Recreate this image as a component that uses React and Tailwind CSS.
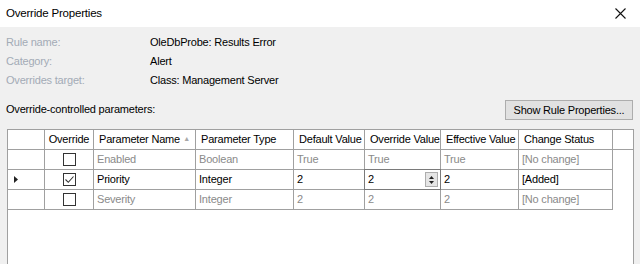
import React from 'react';

const cols = [37, 49, 102, 98, 71, 76, 78, 94];

const headers = ['', 'Override', 'Parameter Name', 'Parameter Type', 'Default Value', 'Override Value', 'Effective Value', 'Change Status'];

const rows = [
  { on: false, name: 'Enabled', type: 'Boolean', def: 'True', ov: 'True', eff: 'True', status: '[No change]', dim: true },
  { on: true, name: 'Priority', type: 'Integer', def: '2', ov: '2', eff: '2', status: '[Added]', dim: false, current: true },
  { on: false, name: 'Severity', type: 'Integer', def: '2', ov: '2', eff: '2', status: '[No change]', dim: true },
];

const CheckBox = ({ checked }) => (
  <div className="w-[13px] h-[13px] border border-[#333333] bg-white flex items-center justify-center">
    {checked && (
      <svg width="11" height="11" viewBox="0 0 11 11">
        <path d="M1.5 5.5 L4.3 8.3 L9.5 2.5" fill="none" stroke="#333" strokeWidth="1.1" />
      </svg>
    )}
  </div>
);

const App = () => {
  return (
    <div className="w-[640px] h-[264px] overflow-hidden bg-[#f0f0f0] text-[11px] tracking-[-0.2px] text-black whitespace-nowrap" style={{ fontFamily: '"Liberation Sans", Arial, sans-serif' }}>
      {/* title bar */}
      <div className="h-[27px] bg-white flex items-center justify-between pl-[6px] pr-[14px]">
        <span className="text-[11.5px]">Override Properties</span>
        <svg width="11" height="11" viewBox="0 0 11 11">
          <path d="M0.5 0.5 L10.5 10.5 M10.5 0.5 L0.5 10.5" stroke="#111" strokeWidth="1.1" />
        </svg>
      </div>

      {/* info */}
      <div className="pt-[6px] pl-[6px] flex flex-col">
        {[
          ['Rule name:', 'OleDbProbe: Results Error'],
          ['Category:', 'Alert'],
          ['Overrides target:', 'Class: Management Server'],
        ].map(([k, v]) => (
          <div key={k} className="flex h-[19px] items-center">
            <span className="w-[144px] text-[#a3abb6]">{k}</span>
            <span>{v}</span>
          </div>
        ))}
      </div>

      {/* params label + button */}
      <div className="flex items-end justify-between pl-[6px] pr-[7px] mt-[5px] h-[25px]">
        <span className="mb-[3px]">Override-controlled parameters:</span>
        <button className="w-[128px] h-[20px] bg-[#e1e1e1] border border-[#adadad] leading-none whitespace-nowrap">
          Show Rule Properties...
        </button>
      </div>

      {/* grid */}
      <div className="ml-[7px] mt-[9px] w-[627px] h-[140px] border border-[#a0a0a0] bg-white">
        {/* header */}
        <div className="flex h-[20px] border-b border-[#a0a0a0]">
          {headers.map((h, i) => (
            <div
              key={i}
              style={{ width: cols[i] }}
              className={`shrink-0 overflow-hidden border-r border-[#a0a0a0] flex items-center px-[5px] ${i === 1 ? 'justify-center' : ''} ${i === 2 ? 'justify-between' : ''}`}
            >
              <span>{h}</span>
              {i === 2 && <span className="text-[7px] text-[#a8a8a8]">▲</span>}
            </div>
          ))}
        </div>
        {rows.map((r, ri) => {
          const txt = r.dim ? 'text-[#8a8a8a]' : 'text-black';
          const cells = [r.name, r.type, r.def, r.ov, r.eff, r.status];
          return (
            <div key={ri} className="flex h-[20px]">
              <div style={{ width: cols[0] }} className="shrink-0 border-r border-b border-[#a0a0a0] flex items-center pl-[6px]">
                {r.current && (
                  <svg width="4" height="7" viewBox="0 0 4 7">
                    <path d="M0 0 L4 3.5 L0 7 Z" fill="#222" />
                  </svg>
                )}
              </div>
              <div style={{ width: cols[1] }} className="shrink-0 border-r border-b border-[#a0a0a0] flex items-center justify-center">
                <CheckBox checked={r.on} />
              </div>
              {cells.map((c, ci) =>
                r.current && ci === 3 ? (
                  <div key={ci} style={{ width: cols[ci + 2] }} className="shrink-0 border-r border-b border-[#a0a0a0] relative">
                    <div className="absolute inset-[-1px] border border-[#7a7a7a] bg-white flex items-center pl-[3px]">
                      <span className="flex-1">{c}</span>
                      <div className="w-[13px] h-[15px] mr-[2px] border border-[#adadad] bg-[#e5e5e5] flex flex-col items-center justify-center gap-[2px]">
                        <svg width="5" height="3" viewBox="0 0 5 3"><path d="M0 3 L2.5 0 L5 3 Z" fill="#222" /></svg>
                        <svg width="5" height="3" viewBox="0 0 5 3"><path d="M0 0 L2.5 3 L5 0 Z" fill="#222" /></svg>
                      </div>
                    </div>
                  </div>
                ) : (
                  <div key={ci} style={{ width: cols[ci + 2] }} className={`shrink-0 overflow-hidden border-r border-b border-[#a0a0a0] flex items-center px-[3px] ${txt}`}>
                    {c}
                  </div>
                )
              )}
            </div>
          );
        })}
      </div>
    </div>
  );
};

export default App;
